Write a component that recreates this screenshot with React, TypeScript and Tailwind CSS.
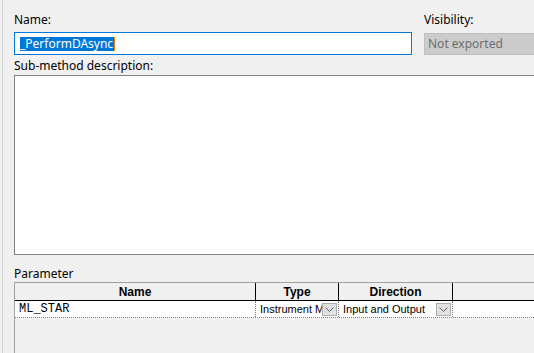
import React from 'react';

const ui = { fontFamily: '"Noto Sans", "Open Sans", sans-serif' };
const grid = { fontFamily: '"Liberation Sans", Arial, sans-serif' };

const DropButton = () => (
  <div className="w-[15px] h-[13px] bg-[#e1e1e1] border border-[#adadad] flex items-center justify-center shrink-0">
    <svg width="9" height="5" viewBox="0 0 9 5">
      <path d="M0.5 0.5 L4.5 4.5 L8.5 0.5" fill="none" stroke="#606060" strokeWidth="1" />
    </svg>
  </div>
);

const Cell = ({ width, children }: { width: string; children: React.ReactNode }) => (
  <div className={`${width} h-full flex items-center pl-[4px] pr-[1px] border-r border-dotted border-[#808080] shrink-0`}>
    {children}
  </div>
);

export default function App() {
  return (
    <div className="w-[534px] h-[353px] bg-[#f0f0f0] overflow-hidden text-[12px] text-black" style={ui}>
      <div className="ml-[2px] h-full border-l border-[#d6d6d6] pl-[11px] pt-[12px] flex flex-col">
        <div className="flex">
          <div className="w-[398px] shrink-0">
            <div className="h-[16px] leading-[16px]">Name:</div>
            <div className="mt-[4px] h-[23px] bg-white border border-[#0078d7] flex items-center pl-[5px]">
              <span className="bg-[#0078d7] text-white leading-[14px] h-[14px] pr-[1px] border-r border-[#e07a10]">_PerformDAsync</span>
            </div>
          </div>
          <div className="ml-[12px] w-[130px] shrink-0">
            <div className="h-[16px] leading-[16px]">Visibility:</div>
            <div className="mt-[5px] h-[22px] bg-[#cccccc] border border-[#bfbfbf] flex items-center pl-[3px] text-[#6d6d6d]">
              Not exported
            </div>
          </div>
        </div>

        <div className="mt-[3px] h-[16px] leading-[16px]">Sub-method description:</div>
        <div className="mt-[1px] h-[180px] w-[540px] bg-white border border-[#828282] shrink-0" />

        <div className="mt-[11px] h-[16px] leading-[16px]">Parameter</div>
        <div className="w-[540px] flex-1 border-l border-t border-[#a0a0a0]" style={grid}>
          <div className="h-[18px] flex font-bold border-b border-black bg-[#f0f0f0]">
            <div className="w-[241px] h-full flex items-center justify-center border-r border-black shrink-0">Name</div>
            <div className="w-[83px] h-full flex items-center justify-center border-r border-black shrink-0">Type</div>
            <div className="w-[114px] h-full flex items-center justify-center border-r border-black shrink-0">Direction</div>
          </div>
          <div className="h-[17px] flex bg-white border-b border-dotted border-[#808080] text-[11px]">
            <div className="w-[241px] h-full flex items-center pl-[4px] border-r border-dotted border-[#808080] shrink-0 text-[12px]" style={{ fontFamily: '"Liberation Mono", monospace' }}>
              ML_STAR
            </div>
            <Cell width="w-[83px]">
              <span className="flex-1 overflow-hidden whitespace-nowrap">Instrument M</span>
              <DropButton />
            </Cell>
            <Cell width="w-[114px]">
              <span className="flex-1 overflow-hidden whitespace-nowrap">Input and Output</span>
              <DropButton />
            </Cell>
          </div>
        </div>
      </div>
    </div>
  );
}
